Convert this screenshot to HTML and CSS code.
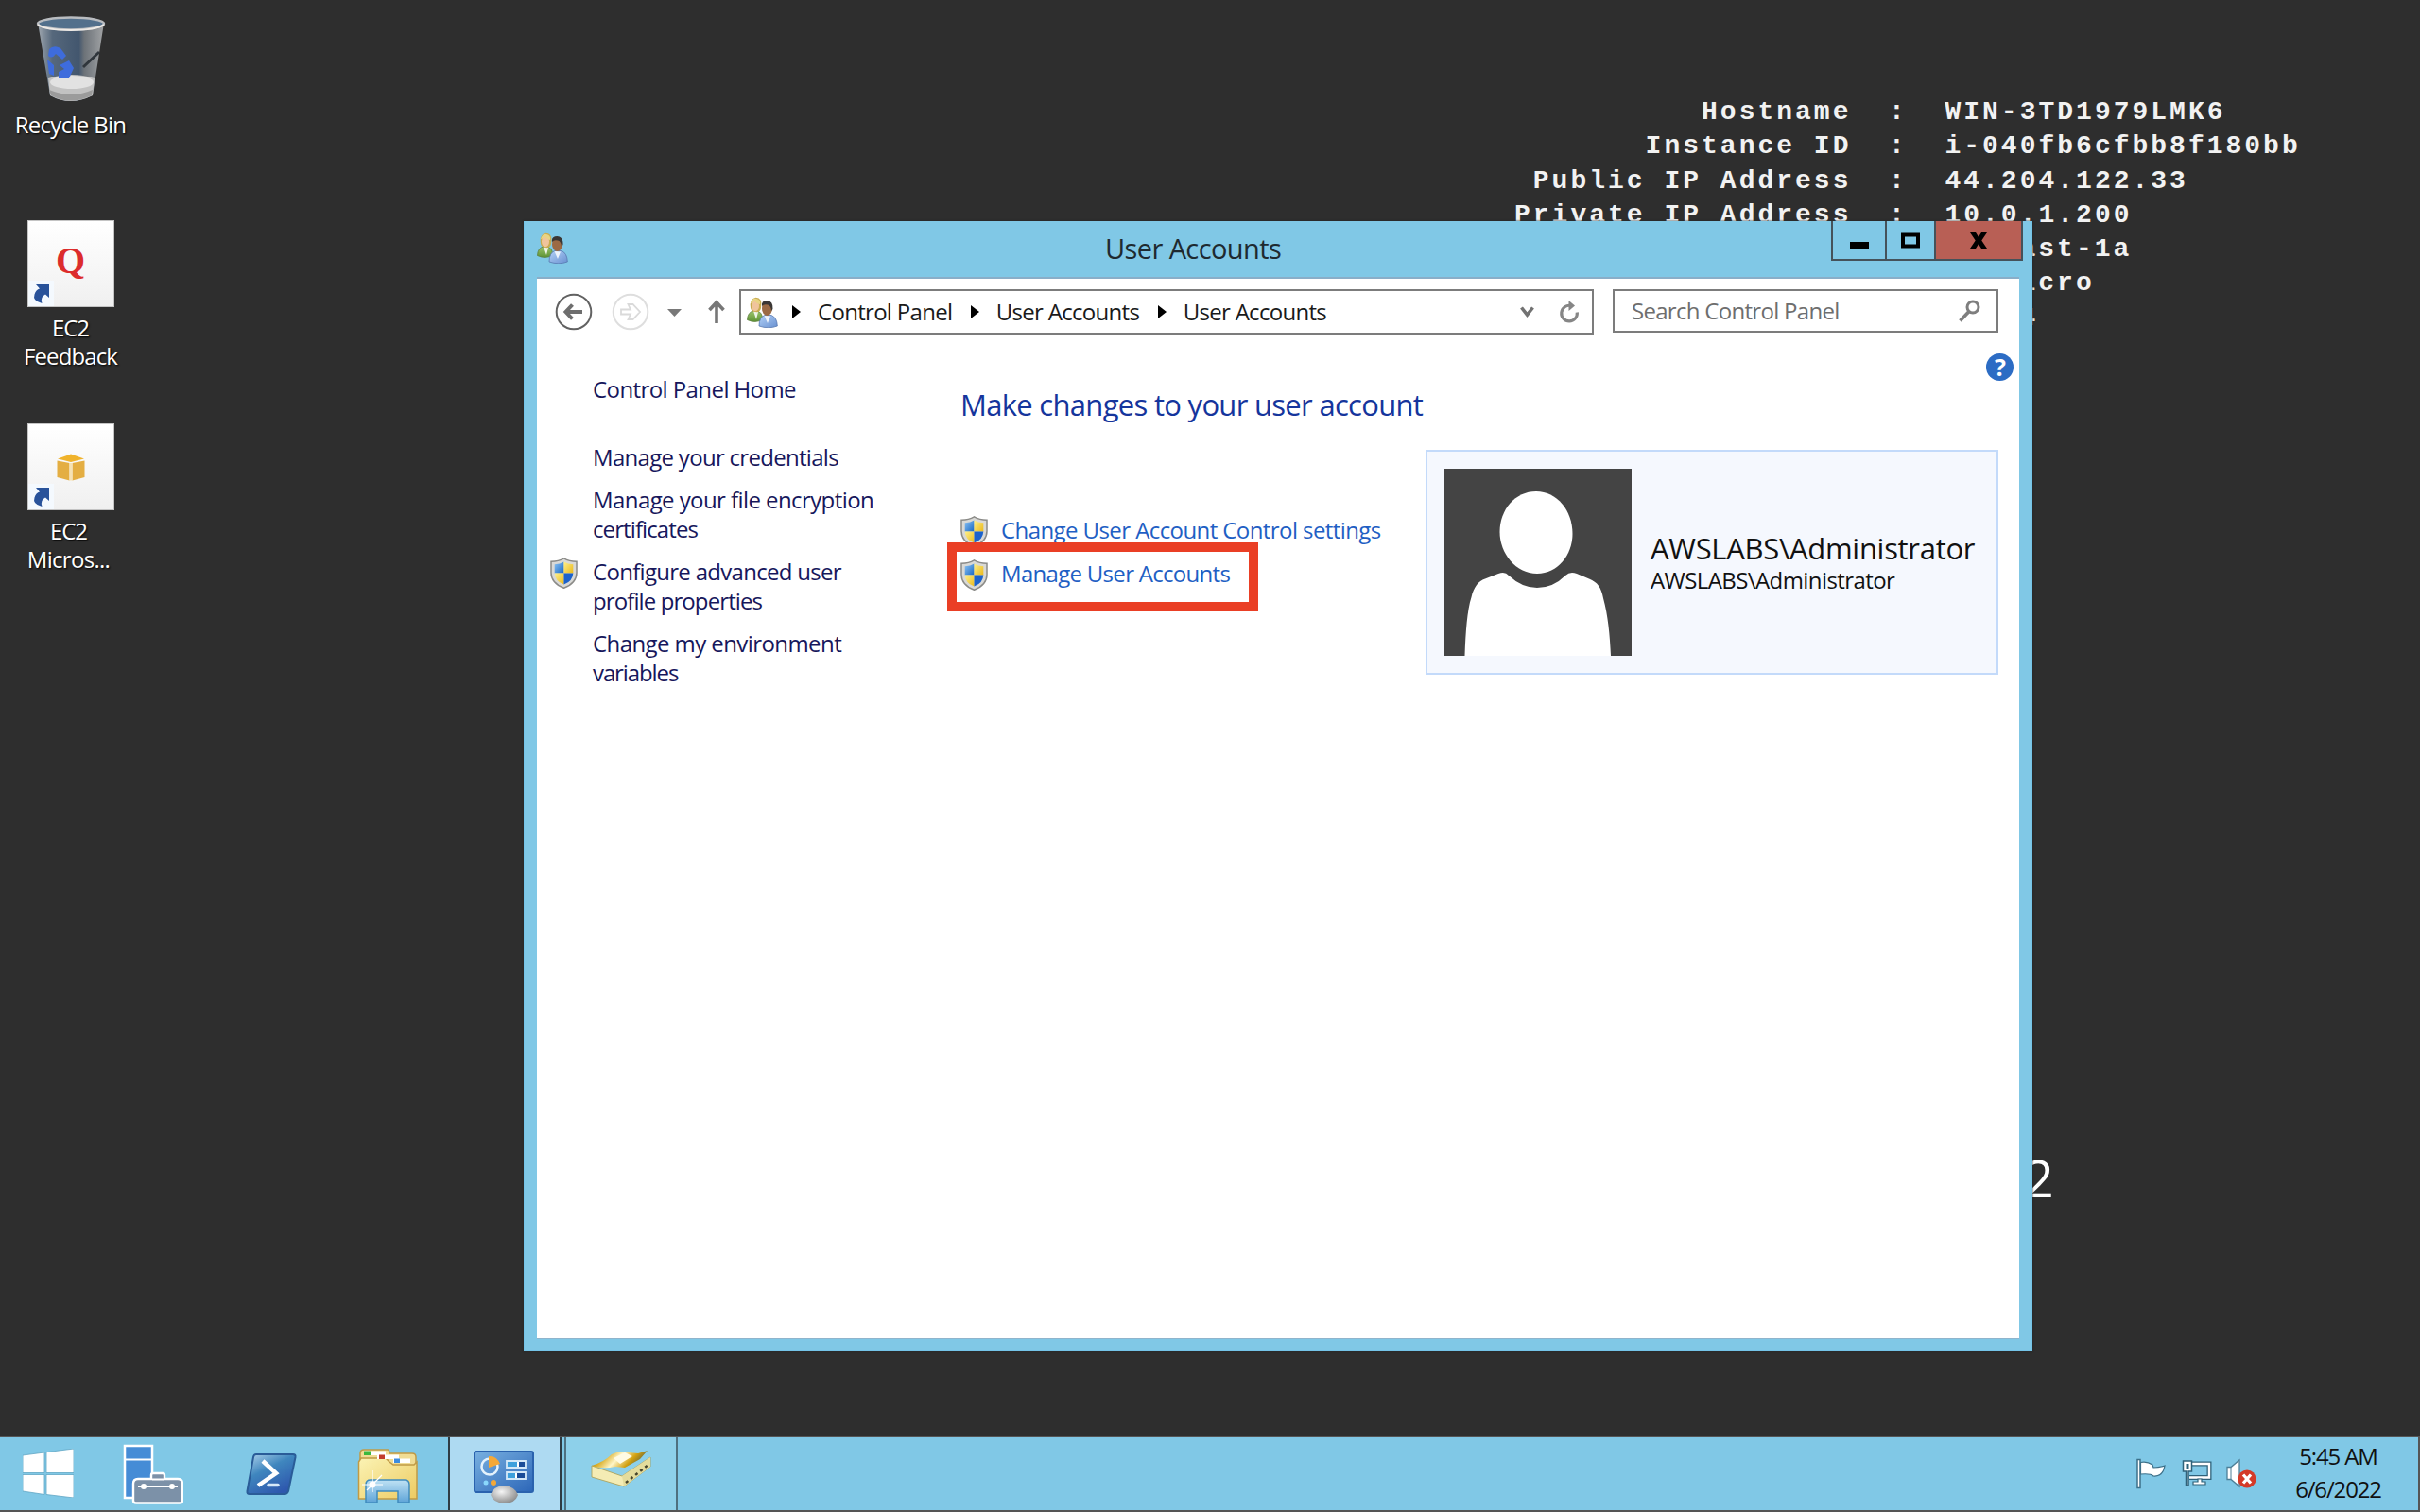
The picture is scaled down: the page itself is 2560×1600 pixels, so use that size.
FILE: index.html
```html
<!DOCTYPE html>
<html lang="en">
<head>
<meta charset="utf-8">
<title>User Accounts</title>
<link rel="stylesheet" href="styles.css">
</head>
<body>
<svg class="defs" aria-hidden="true">
  <defs>
    <linearGradient id="gBlue" x1="0" y1="0" x2="1" y2="1"><stop offset="0" stop-color="#8cc4f4"/><stop offset="1" stop-color="#1767c4"/></linearGradient>
    <linearGradient id="gGold" x1="0" y1="0" x2="1" y2="1"><stop offset="0" stop-color="#fdf08c"/><stop offset="1" stop-color="#eab91c"/></linearGradient>
    <linearGradient id="gShirtG" x1="0" y1="0" x2="0" y2="1"><stop offset="0" stop-color="#9cc46c"/><stop offset="1" stop-color="#5e9434"/></linearGradient>
    <linearGradient id="gShirtB" x1="0" y1="0" x2="1" y2="1"><stop offset="0" stop-color="#b4d2f8"/><stop offset="1" stop-color="#6890d0"/></linearGradient>
    <linearGradient id="gBin" x1="0" y1="0" x2="1" y2="0"><stop offset="0" stop-color="#a0a8b0"/><stop offset=".22" stop-color="#56687c"/><stop offset=".62" stop-color="#42566e"/><stop offset=".7" stop-color="#6c7278"/><stop offset="1" stop-color="#a2a4a6"/></linearGradient>
    <linearGradient id="gPs" x1="0" y1="0" x2=".6" y2="1"><stop offset="0" stop-color="#b0d4ec"/><stop offset=".45" stop-color="#3f86be"/><stop offset="1" stop-color="#2e58ae"/></linearGradient>
    <linearGradient id="gFold" x1="0" y1="0" x2="1" y2="1"><stop offset="0" stop-color="#fbf3b4"/><stop offset="1" stop-color="#eccb62"/></linearGradient>
    <linearGradient id="gStand" x1="0" y1="0" x2="0" y2="1"><stop offset="0" stop-color="#bfe2f4"/><stop offset="1" stop-color="#5ea4d8"/></linearGradient>
    <linearGradient id="gCp" x1="0" y1="0" x2="1" y2="1"><stop offset="0" stop-color="#78b0e0"/><stop offset="1" stop-color="#2c66b8"/></linearGradient>
    <radialGradient id="gBall" cx=".4" cy=".35" r=".7"><stop offset="0" stop-color="#f6f6f6"/><stop offset="1" stop-color="#858585"/></radialGradient>
    <linearGradient id="gCover" x1="0" y1="0" x2="1" y2=".3"><stop offset="0" stop-color="#5a4508"/><stop offset=".3" stop-color="#d8a91c"/><stop offset=".55" stop-color="#fff6c8"/><stop offset=".8" stop-color="#d2a010"/><stop offset="1" stop-color="#6a6a3c"/></linearGradient>
    <symbol id="shield" viewBox="0 0 29 33">
      <path d="M14.500 .8Q20 4 28 4.300V16Q28 27 14.500 32.300Q1 27 1 16V4.300Q9 4 14.500 .8Z" fill="#d9d9d6" stroke="#8b8b88" stroke-width="1.500"/>
      <path d="M14.500 4.500V16.500H4.700V7.200Q10.500 7 14.500 4.500Z" fill="url(#gBlue)"/>
      <path d="M14.500 4.500V16.500H24.300V7.200Q18.500 7 14.500 4.500Z" fill="url(#gGold)"/>
      <path d="M14.500 28.600V16.500H4.700Q5 25 14.500 28.600Z" fill="url(#gGold)"/>
      <path d="M14.500 28.600V16.500H24.300Q24 25 14.500 28.600Z" fill="#1b62cc"/>
    </symbol>
    <symbol id="users" viewBox="0 0 33 33">
      <path d="M.5 24.500Q1 16 7 15H11Q16 16 17 24Q9 28.500 .5 24.500Z" fill="url(#gShirtG)" stroke="#5c7c3c" stroke-width=".8"/>
      <path d="M7 15L10 24L12 16Z" fill="#eef4e8"/>
      <path d="M4 12Q2.500 2 9.500 .8Q17 1 15 12Q14 17 9 16Q5 16 4 12Z" fill="#c8ac50"/>
      <ellipse cx="9" cy="9.500" rx="4" ry="5.800" fill="#f0c49c"/>
      <path d="M4 7Q6 1 10 2Q15 3 14 8Q10 7 8 4.500Q7 7 4 7Z" fill="#e8d484"/>
      <path d="M13 31Q13 21.500 19 19.500H26Q32 22 32.300 31Q23 34.500 13 31Z" fill="url(#gShirtB)" stroke="#5878b0" stroke-width=".8"/>
      <path d="M18.500 20L22 28L25 20.500Z" fill="#eef4fc"/>
      <ellipse cx="21.500" cy="12.500" rx="5.500" ry="7.500" fill="#9c6a44"/>
      <path d="M16 10Q15 4 21.500 4Q28 4.500 27.500 13L26 15Q25.500 9 22 8.500Q18 7.500 16 10Z" fill="#3a3634"/>
    </symbol>
    <symbol id="shortcut" viewBox="0 0 27 27">
      <rect width="27" height="27" fill="#f4f9fe"/>
      <path d="M8 4H22V18L18 14.500Q12 17.500 14.500 24Q4 21.500 6.500 14.500Q8 9.500 12 8.500Z" fill="#28529a"/>
    </symbol>
  </defs>
</svg>

<main class="desktop">
  <div class="sysinfo">
    <pre>          Hostname  :  WIN-3TD1979LMK6
       Instance ID  :  i-040fb6cfbb8f180bb
 Public IP Address  :  44.204.122.33
Private IP Address  :  10.0.1.200</pre>
    <pre class="tail">ast-1a
icro
4</pre>
  </div>
  <div class="edition">2</div>

  <div class="shortcuts">
    <div class="shortcut">
      <svg class="bin" viewBox="0 0 74 91">
        <path d="M2 7L15 84Q36 96 60 84L72 7Z" fill="url(#gBin)"/>
        <path d="M13 66L15 84Q36 96 60 84L62 66Q38 58 13 66Z" fill="#c2c2c2"/>
        <ellipse cx="38" cy="70" rx="23" ry="7" fill="#e2e2e2"/>
        <path d="M16 84Q36 95 59 84L60 78Q38 88 14 78Z" fill="#9b9b9b"/>
        <path d="M14 35Q19 30 26 34L32 42L28 46L21 40Q17 46 13 42ZM12 46L19 52V63L14 61ZM25 52L35 47L40 55L35 66H24V59L30 56Z" fill="#3e6cdc"/>
        <path d="M50 54L67 38" stroke="#30363c" stroke-width="3"/>
        <ellipse cx="37" cy="8" rx="35" ry="6.500" fill="#53708c" stroke="#b9bcc0" stroke-width="2.500"/>
        <path d="M2 9Q10 15 37 15T72 9" fill="none" stroke="#eeeae6" stroke-width="2"/>
      </svg>
      <span>Recycle Bin</span>
    </div>
    <div class="shortcut">
      <div class="tile"><span class="q">Q</span><svg class="arrow"><use href="#shortcut"/></svg></div>
      <span class="tight">EC2</span><span class="snug">Feedback</span>
    </div>
    <div class="shortcut">
      <div class="tile">
        <svg class="cube" viewBox="0 0 30 29"><path d="M1 5.500L15 .5L29 5.500L15 9Z" fill="#f0b32c"/><path d="M.5 7.500L13.500 10V28.500L.5 25Z" fill="#e4ae42"/><path d="M29.500 7.500L16.500 10V28.500L29.500 25Z" fill="#e4ae42"/><path d="M13.500 10H16.500V28.500H13.500Z" fill="#f6e2b4"/></svg>
        <svg class="arrow"><use href="#shortcut"/></svg>
      </div>
      <span class="tight nudge">EC2</span><span class="nudge">Micros...</span>
    </div>
  </div>

  <section class="window">
    <header class="titlebar">
      <svg class="users-icon"><use href="#users"/></svg>
      <h1>User Accounts</h1>
      <div class="controls">
        <div class="ctl min"><svg viewBox="0 0 20 7"><rect width="20" height="7"/></svg></div>
        <div class="ctl max"><svg viewBox="0 0 20 17"><path d="M2 2.500H18V14.500H2Z" fill="none" stroke="#000" stroke-width="4"/></svg></div>
        <div class="ctl close"><svg viewBox="0 0 18 17"><path d="M0 0H6L9 4.800L12 0H18L12.300 8.500L18 17H12L9 12.200L6 17H0L5.700 8.500Z"/></svg></div>
      </div>
    </header>
    <div class="client">
      <nav class="toolbar">
        <svg class="navs" viewBox="0 0 190 44" fill="none">
          <circle cx="22" cy="22" r="18.300" stroke="#626262" stroke-width="2"/>
          <path d="M31 22H14M20.500 14.500L13.500 22L20.500 29.500" stroke="#6e6e6e" stroke-width="4"/>
          <circle cx="82" cy="22" r="18.300" stroke="#dedede" stroke-width="2"/>
          <path d="M72 19.500H82L79.500 14H84.500L92 22L84.500 30H79.500L82 24.500H72Z" stroke="#dadada" stroke-width="1.800"/>
          <path d="M121 19H136L128.500 27Z" fill="#787878"/>
          <path d="M173 34V12M165.500 20L173 12L180.500 20" stroke="#777" stroke-width="3.600"/>
        </svg>
        <div class="address">
          <svg class="users-icon"><use href="#users"/></svg>
          <i class="sep"></i><span>Control Panel</span>
          <i class="sep"></i><span>User Accounts</span>
          <i class="sep"></i><span>User Accounts</span>
          <svg class="chev" viewBox="0 0 15 12"><path d="M1.500 1.500L7.500 9L13.500 1.500" fill="none" stroke="#727272" stroke-width="3.600"/></svg>
          <svg class="refresh" viewBox="0 0 22 24"><path d="M13 5.500A8.300 8.300 0 1 0 19.300 12.500" fill="none" stroke="#868686" stroke-width="3.200"/><path d="M10.500 0L17 5.500L10.500 11Z" fill="#868686"/></svg>
        </div>
        <div class="search">
          <span>Search Control Panel</span>
          <svg viewBox="0 0 23 24"><circle cx="15" cy="8" r="6" fill="none" stroke="#7e7e7e" stroke-width="3"/><path d="M11 12.500L1.500 22.500" stroke="#7e7e7e" stroke-width="3.600"/></svg>
        </div>
      </nav>
      <div class="content">
        <aside class="side">
          <a class="home"><span class="loose">Control Panel Home</span></a>
          <a><span>Manage your credentials</span></a>
          <a><span class="loose">Manage your file encryption</span><br><span class="snug">certificates</span></a>
          <a class="with-shield"><svg class="shield"><use href="#shield"/></svg><span>Configure advanced user</span><br><span class="snug">profile properties</span></a>
          <a><span class="loose">Change my environment</span><br><span class="tight">variables</span></a>
        </aside>
        <div class="main">
          <h2>Make changes to your user account</h2>
          <div class="row">
            <div class="tasks">
              <a><svg class="shield"><use href="#shield"/></svg><span class="loose">Change User Account Control settings</span></a>
              <a class="marked"><svg class="shield"><use href="#shield"/></svg><span>Manage User Accounts</span></a>
            </div>
            <div class="card">
              <svg class="avatar" viewBox="0 0 198 198"><rect width="198" height="198" fill="#444"/><path d="M97 24C119 24 135.500 44 135.500 69C135.500 91 120 111 98 111C75 111 58.500 89 58.500 67C58.500 43 75 24 97 24Z" fill="#fff"/><path d="M21.500 198C22.500 172 24 150 28.500 136C31 125 36 119 43 116.500L57 111Q64 108 68 113Q82 126 98 126Q115 126 128 113Q133 108 140 111L153 116.500C162 120 166 126 168 137C173 155 175 176 176 198Z" fill="#fff"/></svg>
              <div class="who"><span class="full-name">AWSLABS\Administrator</span><span class="loose">AWSLABS\Administrator</span></div>
            </div>
          </div>
        </div>
        <div class="help"><b>?</b></div>
      </div>
    </div>
  </section>
</main>

<footer class="taskbar">
  <svg class="start" viewBox="0 0 54 52"><path d="M0 7L23 4V25.500H0ZM25 3.700L54 0V25.500H25ZM0 27.500H23V48.500L0 45ZM25 27.500H54V52L25 48.500Z" fill="#fff" stroke="#5fa6c4" stroke-width=".8"/></svg>
  <svg class="server" viewBox="0 0 64 64"><path d="M2 2H31V57H2Z" fill="#458cd6" stroke="#fff" stroke-width="2.500"/><path d="M2 16.500H31" stroke="#fff" stroke-width="2"/><path d="M30 37V33Q30 31 32 31H42Q44 31 44 33V37H58Q63 37 63 42V60Q63 62.500 60 62.500H14Q11 62.500 11 60V42Q11 37 16 37Z" fill="#7c91a8" stroke="#fff" stroke-width="2.400"/><path d="M31 37.500H44M16 45H58" stroke="#fff" stroke-width="2"/><circle cx="22" cy="45" r="3" fill="#fff"/><circle cx="52" cy="45" r="3" fill="#fff"/></svg>
  <svg class="ps" viewBox="0 0 54 45"><path d="M11 1H50Q53 1 52.500 4L45 40Q44 43 41 43H4Q1 43 1.500 40L8 4Q8.500 1 11 1Z" fill="url(#gPs)" stroke="#2a5c98" stroke-width="2"/><path d="M18 8L32 21L13 34" fill="none" stroke="#fff" stroke-width="4.500"/><path d="M24 33.500H34" stroke="#d6e8f8" stroke-width="3.500" stroke-linecap="round"/></svg>
  <svg class="explorer" viewBox="0 0 64 58"><path d="M3 12V5Q3 1 7 1H32Q34 1 34 5H58Q62 5 62 9V20H3Z" fill="#f0dc94" stroke="#c09a46" stroke-width="1.500"/><path d="M7 2.500H30V7H7Z" fill="#fff"/><path d="M7 2.500H14V7H7Z" fill="#3cb83c"/><path d="M1.500 14V53H63V14L60 17H38L34 14L30 10H4Z" fill="url(#gFold)" stroke="#c09a46" stroke-width="1.500"/><path d="M21 6.500H44V11H21Z" fill="#fff"/><path d="M23 6.500H29V11H23Z" fill="#c23c2c"/><path d="M38 10.500H56V15H38Z" fill="#fff"/><path d="M39 10.500H45V15H39Z" fill="#3c8ce0"/><path d="M9 57V38Q9 33 14 33H50Q55 33 55 38V57H43V45H21V57Z" fill="url(#gStand)" stroke="#3f8cbe" stroke-width="1.500"/><path d="M16 23V46M5 38H27M10 44L26 28" stroke="#fff" stroke-width="1.200"/><circle cx="16" cy="38" r="3.500" fill="#fff"/></svg>
  <div class="task active"><svg class="cp" viewBox="0 0 64 57"><rect x="1" y="1" width="62" height="43" rx="2" fill="url(#gCp)" stroke="#2a62ae" stroke-width="2"/><circle cx="17" cy="17" r="8.500" fill="none" stroke="#e4f2fc" stroke-width="2.500"/><path d="M16 18V6Q24 5 28 14Z" fill="#f4a838"/><path d="M35 11H55V18H35ZM35 23H55V30H35Z" fill="#3ea0dc" stroke="#d4e8f8" stroke-width="1.800"/><path d="M47 12V17M45 24V29" stroke="#fff" stroke-width="2"/><path d="M48 12H54V17H48ZM46 24H54V29H46Z" fill="#1a4c98"/><circle cx="13" cy="34" r="2.500" fill="#8ad8fc"/><circle cx="21" cy="34" r="3" fill="#f4a838"/><path d="M18 47Q20 38 32 37Q44 38 47 47Q44 56 32 56Q21 55 18 47Z" fill="url(#gBall)"/></svg></div>
  <div class="task open"><svg class="book" viewBox="0 0 64 40"><path d="M1 16L33 27L63 7V17L35 38L1 28Z" fill="#f4ecb4" stroke="#a89c50" stroke-width=".8"/><path d="M33 27L63 7V17L35 38Z" fill="#e4dc9c"/><path d="M37 34L62 14" stroke="#46442c" stroke-width="2.500" stroke-dasharray="3 3.500"/><path d="M1 16Q14 12 22 4L30 1L50 3L60 0L52 9L36 18L26 17Q12 20 1 16Z" fill="url(#gCover)"/><path d="M24 8L36 2L44 6L31 14Z" fill="#fffbe4"/></svg></div>
  <div class="tray">
    <svg viewBox="0 0 33 33"><path d="M2 1.500H5V31.500H2Z" fill="#fff" stroke="#3c7089" stroke-width="1.500"/><path d="M5.500 4.500Q12 3 18 7L19 10Q25 10 31 8Q29 20 19 19Q16 16 5.500 17Z" fill="#fff" stroke="#3c7089" stroke-width="1.200"/></svg>
    <svg viewBox="0 0 33 33"><path d="M11 6H30V20.500H9" fill="none" stroke="#2f627a" stroke-width="5"/><path d="M11 6H30V20.500H9" fill="none" stroke="#fff" stroke-width="2.400"/><path d="M18 22H22V25H26V28H13V25H18Z" fill="#fff" stroke="#2f627a" stroke-width="1.200"/><path d="M2.500 3H11.500V14H8V29H5.500V14H2.500Z" fill="#fff" stroke="#2f627a" stroke-width="1.500"/><path d="M5.500 6H8.500V11H5.500Z" fill="#2f627a"/></svg>
    <svg viewBox="0 0 33 33"><path d="M1 9.500H5L14 2V30L5 22.500H1Z" fill="#fff" stroke="#4d7f97" stroke-width="1.300"/><path d="M5 10V22" stroke="#4d7f97"/><circle cx="22" cy="22" r="9.500" fill="#d43a28"/><path d="M18 17.500L26 26.500M26 17.500L18 26.500" stroke="#fff" stroke-width="3.200"/></svg>
  </div>
  <div class="clock"><span>5:45 AM</span><span>6/6/2022</span></div>
</footer>
</body>
</html>
```
FILE: styles.css
```css
*, *::after { box-sizing: border-box; }

body {
  margin: 0;
  width: 2560px;
  height: 1600px;
  overflow: hidden;
  display: flex;
  flex-direction: column;
  background: #2e2e2e;
  font-family: "Open Sans", "Noto Sans", sans-serif;
  font-size: 24px;
  line-height: 30.4px;
  letter-spacing: -.7px;
}

svg { display: block; flex: none; }
span { white-space: nowrap; }
.defs { position: absolute; width: 0; height: 0; }

.loose { letter-spacing: -.58px; }
.snug { letter-spacing: -.9px; }
.tight { letter-spacing: -1.1px; }

/* Desktop */
.desktop { position: relative; flex: 1; }

.sysinfo {
  position: absolute;
  left: 1602px;
  top: 101px;
  color: #f2f2f2;
}
.sysinfo pre {
  margin: 0;
  font: 700 28px/36.25px "Liberation Mono", monospace;
  letter-spacing: 3px;
}
.sysinfo .tail { margin-left: 534.5px; }

.edition {
  position: absolute;
  right: 388px;
  top: 1208px;
  color: #fff;
  font-size: 55px;
  line-height: 75px;
}

.shortcuts { width: 149px; padding-top: 17px; }
.shortcut {
  height: 215.5px;
  display: flex;
  flex-direction: column;
  align-items: center;
  color: #fff;
  text-shadow: 1px 1px 2px #000;
}
.shortcut .nudge { margin-left: -4px; }
.bin { width: 74px; height: 91px; margin-bottom: 9px; }
.tile {
  position: relative;
  width: 92px;
  height: 92px;
  margin-bottom: 7px;
  border: 1px solid #c4c4c4;
  background: linear-gradient(#fff, #f0f0f0);
  display: flex;
  align-items: center;
  justify-content: center;
}
.q { color: #dc2c2c; font: 700 40px/40px "Liberation Serif", serif; text-shadow: none; letter-spacing: 0; padding-bottom: 6px; }
.cube { width: 30px; height: 29px; }
.arrow { position: absolute; left: 0; bottom: 0; width: 27px; height: 27px; }

/* Window */
.window {
  position: absolute;
  left: 554px;
  top: 234px;
  width: 1596px;
  height: 1196px;
  padding: 0 13px 12px;
  background: #80c8e6;
  border: solid #74c4e8;
  border-width: 0 1px 1px;
  display: flex;
  flex-direction: column;
  box-shadow: 0 0 2px #222;
}
.titlebar {
  height: 59px;
  flex: none;
  display: flex;
  align-items: flex-start;
}
.titlebar .users-icon { margin-top: 12px; }
.users-icon { width: 33px; height: 33px; }
h1 {
  flex: 1;
  margin: 0;
  padding: 9px 0 0 568px;
  font-size: 29px;
  line-height: 40px;
  font-weight: 400;
  letter-spacing: -.6px;
  color: #1e2a30;
}
.controls {
  display: flex;
  height: 42px;
  margin-right: -4px;
  border: 2px solid #45525a;
  border-top: 0;
}
.ctl { display: flex; justify-content: center; }
.ctl + .ctl { border-left: 2px solid #45525a; }
.min { width: 55px; }
.min svg { width: 20px; height: 7px; margin-top: 22px; }
.max { width: 52px; }
.max svg { width: 20px; height: 17px; margin-top: 12px; }
.close { width: 92px; background: #b85f55; }
.close svg { width: 18px; height: 17px; margin-top: 12px; }

.client {
  flex: 1;
  background: #fff;
  border-top: 2px solid #8aaec8;
  border-bottom: 1px solid #8fb4cc;
}
.toolbar {
  display: flex;
  align-items: flex-start;
  height: 61px;
  padding: 11px 22px 0 17px;
}
.navs { width: 190px; height: 44px; margin: 2px 7px 0 0; }
.address, .search {
  display: flex;
  align-items: center;
  border: 2px solid #7c7c7c;
  color: #1a1a1a;
}
.address { width: 904px; height: 48px; padding-left: 6px; margin-right: 20px; }
.address .users-icon { margin-right: 15px; }
.sep {
  flex: none;
  margin-right: 18px;
  border-left: 9px solid #000;
  border-top: 7.5px solid transparent;
  border-bottom: 7.5px solid transparent;
}
.address span + .sep { margin-left: 19.5px; }
.chev { width: 15px; height: 12px; margin-left: auto; margin-right: 26px; }
.refresh { width: 22px; height: 24px; margin-right: 13px; }
.search {
  flex: 1;
  height: 46px;
  padding: 0 17px 0 18px;
  justify-content: space-between;
  color: #6e6e6e;
}
.search svg { width: 23px; height: 24px; }

.content { display: flex; position: relative; }
.side {
  width: 448px;
  padding: 40.5px 0 0 59px;
  display: flex;
  flex-direction: column;
  gap: 15.3px;
  color: #17175c;
}
.home { margin-bottom: 26.3px; }
.with-shield { position: relative; }
.with-shield .shield { position: absolute; left: -45px; top: 0; }
.shield { width: 29px; height: 33px; }
.main { flex: 1; padding: 52px 22px 0 0; }
h2 {
  margin: 0;
  font-size: 31px;
  line-height: 40px;
  font-weight: 400;
  color: #15359c;
}
.row { display: flex; justify-content: space-between; margin-top: 28px; }
.tasks { padding-top: 70px; color: #1f5fc4; }
.tasks a { display: flex; gap: 14px; height: 46px; align-items: flex-start; }
.marked { position: relative; }
.marked::after {
  content: "";
  position: absolute;
  left: -14px;
  top: -18px;
  width: 329px;
  height: 73px;
  border: 10px solid #ea3f25;
}
.card {
  width: 606px;
  height: 238px;
  padding: 18px;
  border: 2px solid #c3dafa;
  background: #f5f8fe;
  display: flex;
}
.avatar { width: 198px; height: 198px; }
.who {
  padding: 65px 0 0 20px;
  display: flex;
  flex-direction: column;
  align-items: flex-start;
  color: #111;
}
.full-name { font-size: 31px; line-height: 38px; letter-spacing: -.3px; }
.help {
  position: absolute;
  right: 6px;
  top: 18px;
  width: 29px;
  height: 29px;
  border-radius: 50%;
  background: #2c6cc4;
  color: #fff;
  text-align: center;
  line-height: 29px;
  font-size: 25px;
}

/* Taskbar */
.taskbar {
  height: 80px;
  flex: none;
  display: flex;
  align-items: flex-start;
  background: #80c8e6;
  border: solid #555;
  border-width: 1px 2px 2px 0;
}
.start { width: 54px; height: 52px; margin: 12px 52px 0 24px; }
.server { width: 64px; height: 64px; margin: 7px 66px 0 0; }
.ps { width: 54px; height: 45px; margin: 17px 64px 0 0; }
.explorer { width: 64px; height: 58px; margin: 12px 32px 0 0; }
.task { height: 77px; border: solid #4e7080; border-width: 0 2px; }
.active { width: 120px; background: #aedaf2; border-color: #2e3c44; margin-right: 3px; }
.open { width: 120px; background: #8dd0ea; }
.cp { width: 64px; height: 57px; margin: 14px 0 0 25px; }
.book { width: 64px; height: 40px; margin: 14px 0 0 26px; }
.tray { margin-left: auto; display: flex; gap: 15px; padding-top: 22px; }
.tray svg { width: 33px; height: 33px; }
.clock {
  width: 91px;
  margin: 3px 39px 0 40px;
  display: flex;
  flex-direction: column;
  align-items: center;
  line-height: 34.5px;
  letter-spacing: -1.15px;
  color: #111;
}
```
